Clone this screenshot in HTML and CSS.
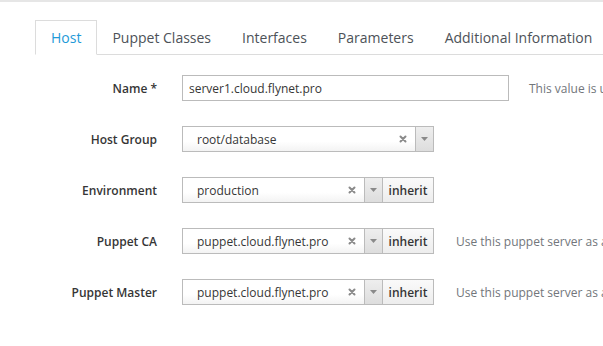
FILE: index.html
```html
<!DOCTYPE html>
<html>
<head>
    <title>Edit Host</title>
    <link rel="stylesheet" href="styles.css">
</head>
<body>

<div class="topbar"></div>

<div class="page">
    <ul class="tabs">
        <li class="active">Host</li>
        <li>Puppet Classes</li>
        <li>Interfaces</li>
        <li>Parameters</li>
        <li>Additional Information</li>
    </ul>

    <form class="host-form">
        <div class="form-row">
            <label>Name *</label>
            <input type="text" class="text-input wide" value="server1.cloud.flynet.pro">
            <span class="help name-help">This value is used also as the host's primary interface name.</span>
        </div>

        <div class="form-row">
            <label>Host Group</label>
            <div class="control">
                <div class="select">
                    <span class="select-value">root/database</span>
                    <span class="select-clear"><svg width="8" height="8" viewBox="0 0 8 8"><path d="M1.5 1.5 L6.5 6.5 M6.5 1.5 L1.5 6.5" stroke="#8a8a8a" stroke-width="2" stroke-linecap="round"/></svg></span>
                    <span class="select-arrow"><svg width="7" height="4" viewBox="0 0 7 4"><path d="M0 0 H7 L3.5 4 Z" fill="#8a8a8a"/></svg></span>
                </div>
            </div>
        </div>

        <div class="form-row">
            <label>Environment</label>
            <div class="control">
                <div class="select">
                    <span class="select-value">production</span>
                    <span class="select-clear"><svg width="8" height="8" viewBox="0 0 8 8"><path d="M1.5 1.5 L6.5 6.5 M6.5 1.5 L1.5 6.5" stroke="#8a8a8a" stroke-width="2" stroke-linecap="round"/></svg></span>
                    <span class="select-arrow"><svg width="7" height="4" viewBox="0 0 7 4"><path d="M0 0 H7 L3.5 4 Z" fill="#8a8a8a"/></svg></span>
                </div>
                <button type="button" class="inherit-btn">inherit</button>
            </div>
        </div>

        <div class="form-row">
            <label>Puppet CA</label>
            <div class="control">
                <div class="select">
                    <span class="select-value">puppet.cloud.flynet.pro</span>
                    <span class="select-clear"><svg width="8" height="8" viewBox="0 0 8 8"><path d="M1.5 1.5 L6.5 6.5 M6.5 1.5 L1.5 6.5" stroke="#8a8a8a" stroke-width="2" stroke-linecap="round"/></svg></span>
                    <span class="select-arrow"><svg width="7" height="4" viewBox="0 0 7 4"><path d="M0 0 H7 L3.5 4 Z" fill="#8a8a8a"/></svg></span>
                </div>
                <button type="button" class="inherit-btn">inherit</button>
            </div>
            <span class="help">Use this puppet server as an initial Puppet CA</span>
        </div>

        <div class="form-row">
            <label>Puppet Master</label>
            <div class="control">
                <div class="select">
                    <span class="select-value">puppet.cloud.flynet.pro</span>
                    <span class="select-clear"><svg width="8" height="8" viewBox="0 0 8 8"><path d="M1.5 1.5 L6.5 6.5 M6.5 1.5 L1.5 6.5" stroke="#8a8a8a" stroke-width="2" stroke-linecap="round"/></svg></span>
                    <span class="select-arrow"><svg width="7" height="4" viewBox="0 0 7 4"><path d="M0 0 H7 L3.5 4 Z" fill="#8a8a8a"/></svg></span>
                </div>
                <button type="button" class="inherit-btn">inherit</button>
            </div>
            <span class="help">Use this puppet server as an initial Puppet Server or to execute puppet runs</span>
        </div>
    </form>
</div>

</body>
</html>
```

FILE: styles.css
```css
body {
    font-family: "Open Sans", Arial, sans-serif;
    font-size: 12px;
    color: #363636;
    background-color: white;
    margin: 0;
    padding: 0;
    overflow: hidden;
}
.topbar {
    height: 2px;
    background: #e6e6e6;
}
.page {
    padding: 18px 0 0 35px;
}
.tabs {
    display: flex;
    list-style: none;
    margin: 0;
    padding: 0;
    border-bottom: 1px solid #dcdcdc;
    white-space: nowrap;
}
.tabs li {
    font-size: 14px;
    line-height: 33px;
    padding: 0 15px;
    color: #4d5258;
    border: 1px solid transparent;
    border-bottom: none;
    margin-bottom: -1px;
    margin-right: -1px;
}
.tabs li.active {
    color: #1e9ad8;
    background: white;
    border-color: #dcdcdc;
    border-bottom: 1px solid white;
}
.host-form {
    padding-top: 20px;
}
.form-row {
    display: flex;
    align-items: center;
    height: 26px;
    margin-bottom: 25px;
    white-space: nowrap;
}
.form-row label {
    width: 122px;
    margin-right: 25px;
    text-align: right;
    font-weight: 600;
    flex-shrink: 0;
}
.text-input {
    box-sizing: border-box;
    height: 26px;
    padding: 0 6px;
    border: 1px solid #bbb;
    font-family: "Open Sans", Arial, sans-serif;
    font-size: 12px;
    color: #363636;
    margin: 0;
}
.text-input.wide {
    width: 327px;
    flex-shrink: 0;
}
.control {
    display: flex;
    width: 252px;
    height: 26px;
    flex-shrink: 0;
}
.select {
    flex: 1;
    display: flex;
    align-items: center;
    box-sizing: border-box;
    height: 26px;
    border: 1px solid #bbb;
    background: linear-gradient(#ffffff 60%, #f3f3f3);
}
.select-value {
    flex: 1;
    padding-left: 14px;
}
.select-clear {
    display: flex;
    width: 8px;
    margin-right: 8px;
}
.select-arrow {
    display: flex;
    align-items: center;
    justify-content: center;
    width: 17px;
    height: 100%;
    border-left: 1px solid #bbb;
    background: linear-gradient(#eeeeee, #dddddd);
}
.inherit-btn {
    box-sizing: border-box;
    width: 51px;
    height: 26px;
    margin: 0;
    padding: 0;
    border: 1px solid #bbb;
    border-left: none;
    background: linear-gradient(#fafafa, #ededed);
    font-family: "Open Sans", Arial, sans-serif;
    font-size: 12px;
    font-weight: 600;
    color: #363636;
}
.help {
    margin-left: 22px;
    color: #72767b;
}
.name-help {
    margin-left: 20px;
}
```
